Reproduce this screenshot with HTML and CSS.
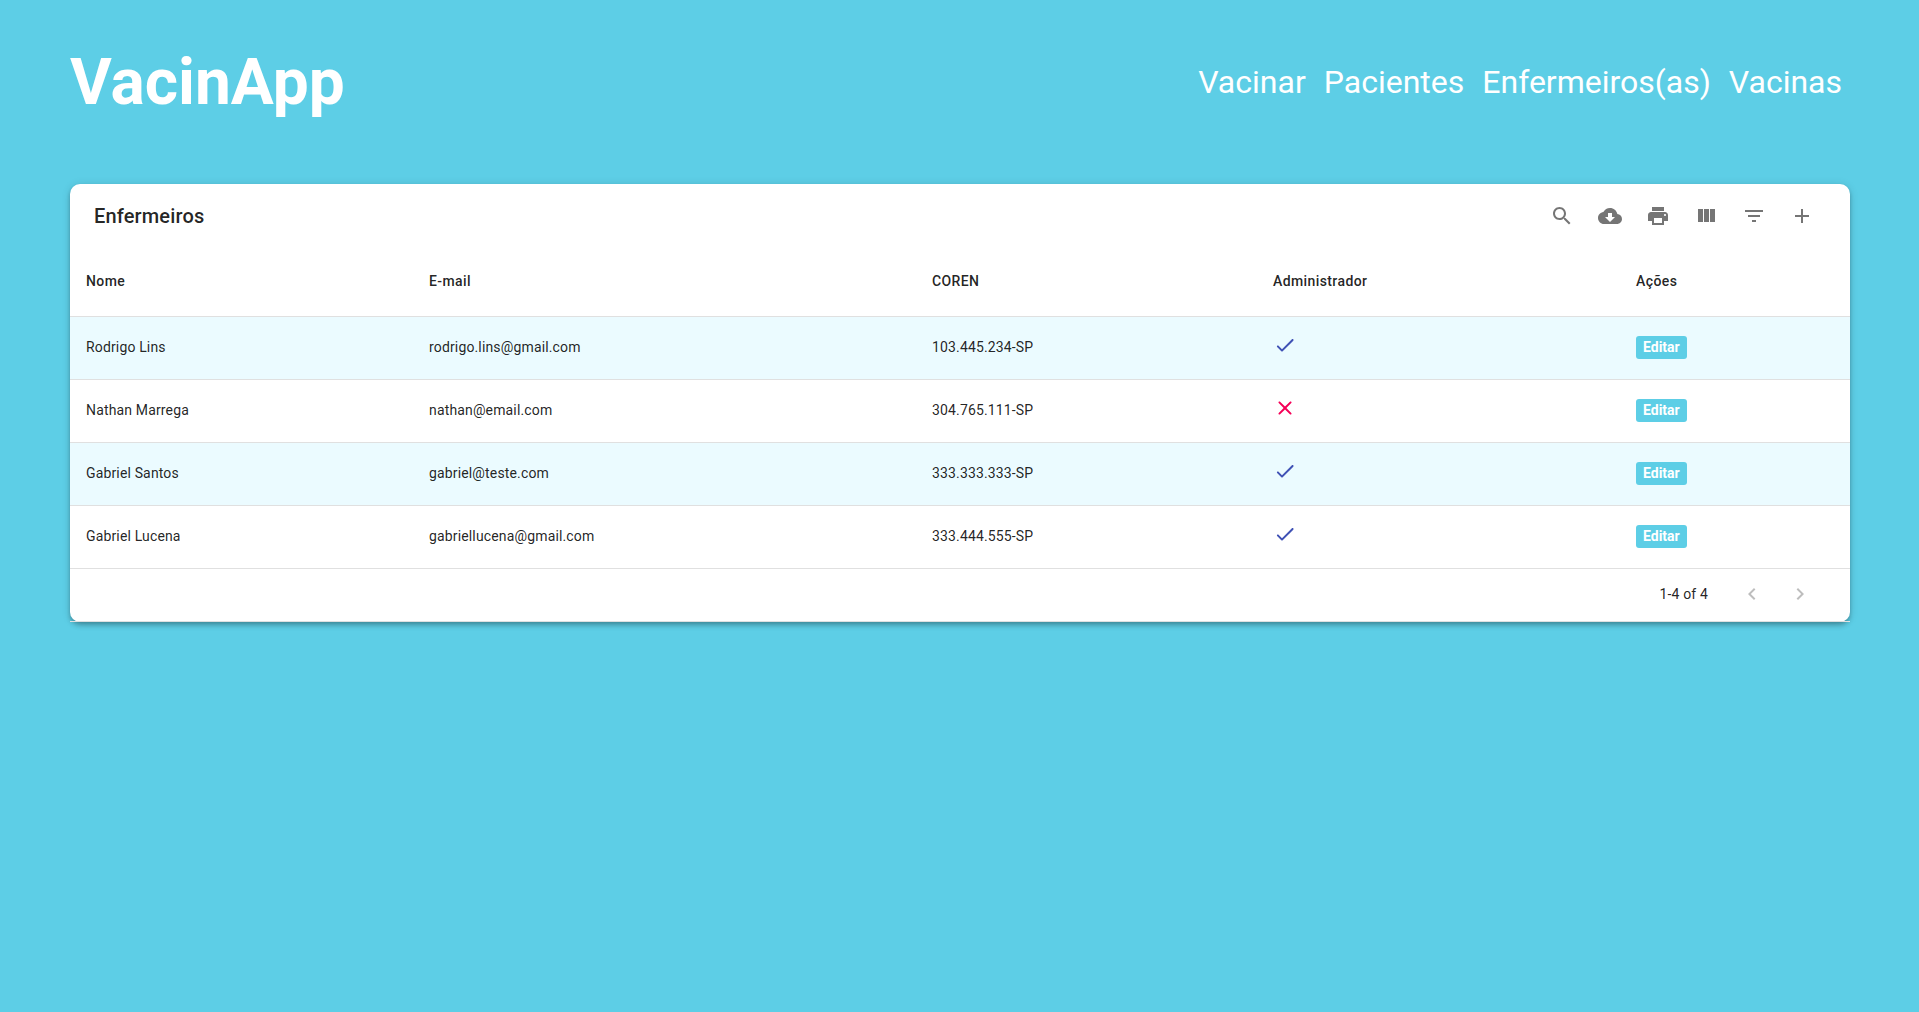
FILE: index.html
```html
<!DOCTYPE html>
<html lang="pt-BR">
<head>
<meta charset="utf-8">
<title>VacinApp</title>
<link rel="stylesheet" href="styles.css">
</head>
<body>
<svg class="sprite" aria-hidden="true">
  <symbol id="check" viewBox="0 0 24 24"><path d="M9 16.17L5.53 12.7c-.39-.39-1.02-.39-1.41 0-.39.39-.39 1.02 0 1.41l4.18 4.18c.39.39 1.02.39 1.41 0L20.29 7.71c.39-.39.39-1.02 0-1.41-.39-.39-1.02-.39-1.41 0L9 16.17z"/></symbol>
  <symbol id="close" viewBox="0 0 24 24"><path d="M18.3 5.71c-.39-.39-1.02-.39-1.41 0L12 10.59 7.11 5.7c-.39-.39-1.02-.39-1.41 0-.39.39-.39 1.02 0 1.41L10.59 12 5.7 16.89c-.39.39-.39 1.02 0 1.41.39.39 1.02.39 1.41 0L12 13.41l4.89 4.89c.39.39 1.02.39 1.41 0 .39-.39.39-1.02 0-1.41L13.41 12l4.89-4.89c.38-.38.38-1.02 0-1.4z"/></symbol>
</svg>
<header class="header">
  <h1 class="logo">VacinApp</h1>
  <nav class="nav">
    <a class="nav-link">Vacinar</a>
    <a class="nav-link">Pacientes</a>
    <a class="nav-link">Enfermeiros(as)</a>
    <a class="nav-link">Vacinas</a>
  </nav>
</header>
<main class="card">
  <div class="toolbar">
    <h2 class="title">Enfermeiros</h2>
    <div class="actions">
      <button class="icon-button" aria-label="Search"><svg class="icon" viewBox="0 0 24 24"><path d="M15.5 14h-.79l-.28-.27C15.41 12.59 16 11.11 16 9.5 16 5.91 13.09 3 9.5 3S3 5.91 3 9.5 5.91 16 9.5 16c1.61 0 3.09-.59 4.23-1.57l.27.28v.79l5 4.99L20.49 19l-4.99-5zm-6 0C7.01 14 5 11.99 5 9.5S7.01 5 9.5 5 14 7.01 14 9.5 11.99 14 9.5 14z"/></svg></button>
      <button class="icon-button" aria-label="Download"><svg class="icon" viewBox="0 0 24 24"><path d="M19.35 10.04C18.67 6.59 15.64 4 12 4 9.11 4 6.6 5.64 5.35 8.04 2.34 8.36 0 10.91 0 14c0 3.31 2.69 6 6 6h13c2.76 0 5-2.24 5-5 0-2.64-2.05-4.78-4.65-4.96zM17 13l-5 5-5-5h3V9h4v4h3z"/></svg></button>
      <button class="icon-button" aria-label="Print"><svg class="icon" viewBox="0 0 24 24"><path d="M19 8H5c-1.66 0-3 1.34-3 3v6h4v4h12v-4h4v-6c0-1.66-1.34-3-3-3zm-3 11H8v-5h8v5zm3-7c-.55 0-1-.45-1-1s.45-1 1-1 1 .45 1 1-.45 1-1 1zm-1-9H6v4h12V3z"/></svg></button>
      <button class="icon-button" aria-label="View columns"><svg class="icon" viewBox="0 0 24 24"><path d="M10 18h5V5h-5v13zm-6 0h5V5H4v13zM16 5v13h5V5h-5z"/></svg></button>
      <button class="icon-button" aria-label="Filter"><svg class="icon" viewBox="0 0 24 24"><path d="M10 18h4v-2h-4v2zM3 6v2h18V6H3zm3 7h12v-2H6v2z"/></svg></button>
      <button class="icon-button" aria-label="Add"><svg class="icon" viewBox="0 0 24 24"><path d="M19 13h-6v6h-2v-6H5v-2h6V5h2v6h6v2z"/></svg></button>
    </div>
  </div>
  <table class="table">
    <colgroup><col class="col-name"><col class="col-email"><col class="col-coren"><col class="col-admin"><col></colgroup>
    <thead>
      <tr><th>Nome</th><th>E-mail</th><th>COREN</th><th>Administrador</th><th>Ações</th></tr>
    </thead>
    <tbody>
      <tr><td>Rodrigo Lins</td><td>rodrigo.lins@gmail.com</td><td>103.445.234-SP</td><td><svg class="status status-yes"><use href="#check"/></svg></td><td><a class="edit">Editar</a></td></tr>
      <tr><td>Nathan Marrega</td><td>nathan@email.com</td><td>304.765.111-SP</td><td><svg class="status status-no"><use href="#close"/></svg></td><td><a class="edit">Editar</a></td></tr>
      <tr><td>Gabriel Santos</td><td>gabriel@teste.com</td><td>333.333.333-SP</td><td><svg class="status status-yes"><use href="#check"/></svg></td><td><a class="edit">Editar</a></td></tr>
      <tr><td>Gabriel Lucena</td><td>gabriellucena@gmail.com</td><td>333.444.555-SP</td><td><svg class="status status-yes"><use href="#check"/></svg></td><td><a class="edit">Editar</a></td></tr>
    </tbody>
  </table>
  <div class="pagination">
    <span class="range">1-4 of 4</span>
    <button class="icon-button disabled" aria-label="Previous page"><svg class="icon" viewBox="0 0 24 24"><path d="M15.41 7.41L14 6l-6 6 6 6 1.41-1.41L10.83 12z"/></svg></button>
    <button class="icon-button disabled" aria-label="Next page"><svg class="icon" viewBox="0 0 24 24"><path d="M10 6L8.59 7.41 13.17 12l-4.58 4.59L10 18l6-6z"/></svg></button>
  </div>
</main>
</body>
</html>
```
FILE: styles.css
```css
* { box-sizing: border-box; margin: 0; padding: 0; }

body {
  min-height: 100vh;
  padding: 0 69px 0 70px;
  background: #5dcee6;
  color: rgba(0, 0, 0, 0.87);
  font-family: Roboto, sans-serif;
  font-size: 14px;
}

.sprite { display: none; }

.header {
  display: flex;
  align-items: center;
  justify-content: space-between;
  height: 184px;
  padding: 0 8px 20px 0;
  color: #fff;
}

.logo { font-size: 64px; font-weight: 700; line-height: 75px; }

.nav { display: flex; gap: 18px; }

.nav-link { font-size: 32px; line-height: 38px; }

.card {
  height: 438px;
  background: #fff;
  border-radius: 10px;
  box-shadow: 0 2px 4px -1px rgba(0, 0, 0, 0.2), 0 4px 5px 0 rgba(0, 0, 0, 0.14), 0 1px 10px 0 rgba(0, 0, 0, 0.12);
}

.toolbar {
  display: flex;
  align-items: center;
  justify-content: space-between;
  height: 64px;
  padding: 0 24px;
}

.title { font-size: 20px; font-weight: 500; line-height: 32px; letter-spacing: 0.0075em; }

.actions { display: flex; }

.icon-button {
  display: flex;
  align-items: center;
  justify-content: center;
  width: 48px;
  height: 48px;
  border: 0;
  background: none;
  color: rgba(0, 0, 0, 0.54);
}

.icon-button.disabled { color: rgba(0, 0, 0, 0.26); }

.icon { width: 24px; height: 24px; fill: currentColor; }

.table {
  width: 100%;
  table-layout: fixed;
  border-spacing: 0;
  border-collapse: separate;
}

.col-name { width: 343px; }
.col-email { width: 503px; }
.col-coren { width: 341px; }
.col-admin { width: 363px; }

.table th,
.table td {
  padding: 0 16px 2px;
  border-bottom: 1px solid #e0e0e0;
  text-align: left;
  vertical-align: middle;
  line-height: 20px;
  letter-spacing: 0.01071em;
}

.table th { height: 69px; font-weight: 500; letter-spacing: 0.02857em; }
.table td { height: 63px; }

.table tbody tr:nth-child(odd) { background: #ebfbff; }

.status { display: block; width: 24px; height: 24px; margin-bottom: 4px; }
.status-yes { fill: #3f51b5; }
.status-no { fill: #f50057; }

.edit {
  display: inline-block;
  padding: 0 7px;
  border-radius: 3px;
  background: #5dcee6;
  color: #fff;
  font-weight: 700;
  line-height: 23px;
  letter-spacing: 0;
}

.pagination {
  display: flex;
  align-items: center;
  justify-content: flex-end;
  height: 53px;
  padding: 0 26px 2px 0;
  border-bottom: 1px solid #e0e0e0;
}

.range { margin-right: 20px; line-height: 20px; letter-spacing: 0.01071em; }
```
